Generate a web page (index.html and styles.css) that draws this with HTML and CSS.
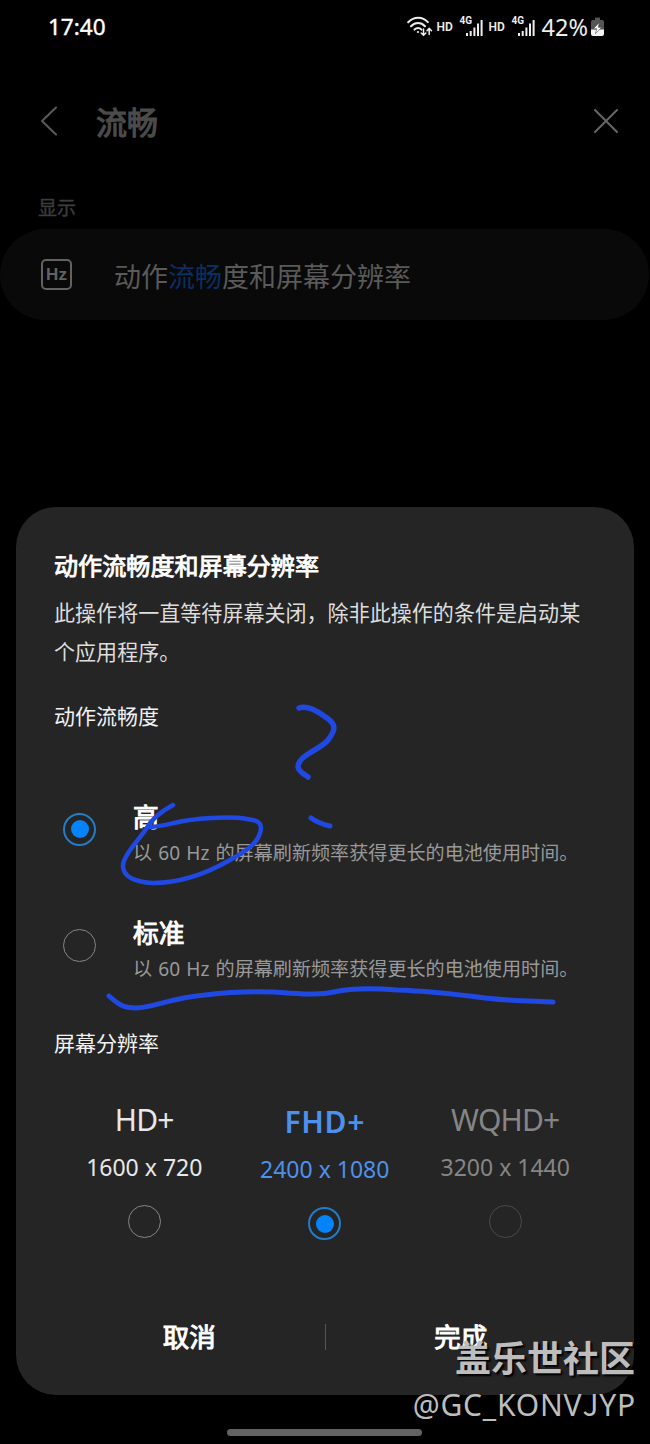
FILE: index.html
```html
<!DOCTYPE html>
<html lang="zh-CN">
<head>
<meta charset="utf-8">
<title>动作流畅度和屏幕分辨率</title>
<link rel="stylesheet" href="styles.css">
</head>
<body>
<div class="screen">
  <header class="status">
    <span class="clock">17:40</span>
    <div class="indicators">
      <svg class="wifi" width="26" height="22" viewBox="0 0 26 22" fill="none" stroke="#eee" stroke-width="2" stroke-linecap="round">
        <path d="M1.2 6.2C7 .2 15.500 .2 20.800 6.200M4 10.200c4.200-4.200 10-4.200 14 0M7.500 13.600c2.200-2 5-2 7 0"/>
        <circle cx="11" cy="16" r="1.100" fill="#eee" stroke="none"/>
        <path stroke-width="1.500" d="M16.500 13v6M14.200 17l2.300 2.300L18.800 17M22.200 18.500v-6M20 14.700l2.200-2.300 2.300 2.300"/>
      </svg>
      <span class="hd hd-first">HD</span>
      <div class="cell"><span class="gen">4G</span><svg width="22" height="20" viewBox="0 0 22 20" fill="#eee"><path d="M5 16h2v3H5zM8.700 14h2v5h-2zM12.400 10.500h2V19h-2zM16 6.500h2V19h-2zM19.600 3h2v16h-2z"/></svg></div>
      <span class="hd hd-second">HD</span>
      <div class="cell"><span class="gen">4G</span><svg width="22" height="20" viewBox="0 0 22 20" fill="#eee"><path d="M5 16h2v3H5zM8.700 14h2v5h-2zM12.400 10.500h2V19h-2zM16 6.500h2V19h-2zM19.600 3h2v16h-2z"/></svg></div>
      <span class="percent">42%</span>
      <svg class="battery" width="13" height="20" viewBox="0 0 13 20">
        <path fill="#555" d="M4 1.200Q4 .5 4.700 .5h3.600q.7 0 .7.700V3h2q2 0 2 2v8H0V5q0-2 2-2h2z"/>
        <path fill="#f4f4f4" d="M0 12.500h13V17q0 2-2 2H2q-2 0-2-2z"/>
        <path fill="#fff" stroke="#333" stroke-width=".5" d="M8.400 5.500 2.300 11.800h3.500l-1.400 4.900 6.300-6.400H7.200z"/>
      </svg>
    </div>
  </header>

  <div class="search-head">
    <svg class="back" width="18" height="30" viewBox="0 0 18 30" fill="none" stroke="#5a5a5a" stroke-width="2" stroke-linecap="round" stroke-linejoin="round"><path d="M16 1.500 2 15l14 13.500"/></svg>
    <h1 class="query">流畅</h1>
    <svg class="close" width="26" height="26" viewBox="0 0 26 26" stroke="#666" stroke-width="2" stroke-linecap="round"><path d="M2 2l22 22M24 2 2 24"/></svg>
  </div>
  <p class="group">显示</p>
  <div class="result">
    <div class="hz">Hz</div>
    <p class="result-name">动作<span class="match">流畅</span>度和屏幕分辨率</p>
  </div>

  <main class="dialog">
    <h2 class="title">动作流畅度和屏幕分辨率</h2>
    <p class="message">此操作将一直等待屏幕关闭，除非此操作的条件是启动某<br>个应用程序。</p>
    <h3 class="label label-motion">动作流畅度</h3>
    <div class="option">
      <i class="radio on"></i>
      <div class="option-text"><div class="option-name">高</div><p class="option-desc">以 60 Hz 的屏幕刷新频率获得更长的电池使用时间。</p></div>
    </div>
    <div class="option">
      <i class="radio"></i>
      <div class="option-text"><div class="option-name">标准</div><p class="option-desc">以 60 Hz 的屏幕刷新频率获得更长的电池使用时间。</p></div>
    </div>
    <h3 class="label label-resolution">屏幕分辨率</h3>
    <div class="resolutions">
      <div class="res"><span class="res-name">HD+</span><span class="res-size">1600 x 720</span><i class="radio"></i></div>
      <div class="res selected"><span class="res-name">FHD+</span><span class="res-size">2400 x 1080</span><i class="radio on"></i></div>
      <div class="res disabled"><span class="res-name">WQHD+</span><span class="res-size">3200 x 1440</span><i class="radio"></i></div>
    </div>
    <div class="actions">
      <span class="action">取消</span><i class="divider"></i><span class="action">完成</span>
    </div>
  </main>
  <div class="home-bar"></div>

  <svg class="ink" width="650" height="1444" viewBox="0 0 650 1444" fill="none" stroke="#1f49e2" stroke-width="5.500" stroke-linecap="round" stroke-linejoin="round">
    <path d="M299 708C308 705 317 711 327 718C337 725 335 731 328 740C320 750 298 755 298 767C299 772 304 774 308 777"/>
    <path stroke-width="5" d="M311 818C315 821 324 825 330 826"/>
    <path stroke-width="4.500" d="M173 805C160 812 151 820 146 829C138 841 122 857 123 867C124 876 134 882 153 883C179 883 204 875 230 860C250 849 260 841 261 828C261 822 256 820 247 819C229 816 194 818 174 823C165 825 157 827 149 827"/>
    <path stroke-width="5" d="M109 996C118 1004 123 1008 136 1008C155 1007 171 998 205 995C240 991 263 991 288 993C306 994 320 995 334 992C352 988 371 988 397 990C430 991 454 994 485 998C511 1001 535 1001 553 1002"/>
  </svg>
  <div class="watermark">
    <div class="community">盖乐世社区</div>
    <div class="author">@GC_KONV<span class="author-j">J</span>YP</div>
  </div>
</div>
</body>
</html>
```
FILE: styles.css
```css
* { box-sizing: border-box; margin: 0; padding: 0; }
body {
  background: #000;
  font-family: "Noto Sans", "Noto Sans CJK SC", sans-serif;
  color: #fff;
}
.screen {
  position: relative;
  width: 650px;
  height: 1444px;
  overflow: hidden;
  display: flex;
  flex-direction: column;
}

.status {
  display: flex;
  justify-content: space-between;
  align-items: center;
  height: 54px;
  padding: 0 46px 0 48px;
}
.clock { font-size: 22.500px; line-height: 30px; -webkit-text-stroke: 0.400px currentColor; }
.indicators { display: flex; align-items: center; color: #eee; }
.hd { font-size: 12px; line-height: 16px; font-weight: 600; width: 17px; font-family: Roboto, sans-serif; }
.hd-first { margin: 0 7px 0 4px; }
.hd-second { margin: 0 7px 0 6px; }
.cell { display: flex; position: relative; width: 22px; height: 20px; }
.cell svg { display: block; }
.gen {
  position: absolute;
  left: -1px;
  top: -2px;
  font: 700 10px/12px Roboto, sans-serif;
}
.percent { font-size: 23.500px; line-height: 30px; margin-left: 7px; }
.battery { margin-left: 3px; }

.search-head {
  display: flex;
  align-items: center;
  height: 60px;
  margin-top: 37px;
  padding: 0 31px 0 40px;
}
.query {
  margin-left: 38px;
  padding-top: 3px;
  font-size: 31px;
  line-height: 43px;
  font-weight: 400;
  color: #4b4b4b;
  -webkit-text-stroke: 1.200px currentColor;
}
.close { margin-left: auto; }
.group { margin: 43px 0 0 38px; font-size: 19px; line-height: 28px; color: #3c3c3c; -webkit-text-stroke: 0.400px currentColor; }
.result {
  display: flex;
  align-items: center;
  height: 91px;
  margin: 7px 1px 0 0;
  padding-left: 41px;
  border-radius: 46px;
  background: #090909;
}
.hz {
  width: 31px;
  height: 31px;
  border: 2px solid #626262;
  border-radius: 5px;
  font: 700 17px/28px "Liberation Sans", sans-serif;
  text-align: center;
  color: #626262;
}
.result-name { margin-left: 42px; padding-top: 5px; font-size: 27px; line-height: 40px; color: #5a5a5a; }
.match { color: #092f60; }

.dialog {
  width: 618px;
  height: 888px;
  margin: 187px 0 0 16px;
  padding: 42px 38px 0;
  border-radius: 40px;
  background: #252525;
}
.title { font-size: 24.100px; line-height: 34px; font-weight: 400; -webkit-text-stroke: 0.900px currentColor; }
.message { margin-top: 10px; font-size: 21.060px; line-height: 39px; color: #dedede; white-space: nowrap; }
.label { font-size: 21px; line-height: 30px; font-weight: 400; color: #f2f2f2; }
.label-motion { margin-top: 30px; }
.option {
  display: flex;
  align-items: center;
  gap: 37px;
  height: 116px;
  padding-left: 9px;
}
.label-motion + .option { margin-top: 40px; }
.option-text { padding-top: 12px; }
.radio {
  display: flex;
  align-items: center;
  justify-content: center;
  flex: none;
  width: 33px;
  height: 33px;
  border: 1.500px solid #858585;
  border-radius: 50%;
}
.radio.on { border: 2px solid #227cc8; }
.radio.on::after { content: ""; width: 18px; height: 18px; border-radius: 50%; background: #0583fb; }
.option-name { font-size: 25.700px; line-height: 36px; font-weight: 400; -webkit-text-stroke: 1px currentColor; }
.option-desc { font-size: 19.100px; line-height: 34px; word-spacing: 1.200px; color: #999; white-space: nowrap; }
.label-resolution { margin-top: 25px; }

.resolutions { display: grid; grid-template-columns: repeat(3, 180.500px); margin: 42px 0 0 0; }
.res { display: flex; flex-direction: column; align-items: center; color: #e8e8e8; }
.res-name { font-size: 30px; line-height: 40px; letter-spacing: -0.800px; }
.res-size { margin-top: 10px; font-size: 23px; line-height: 34px; }
.res .radio { margin-top: 21px; }
.selected { color: #4e91ec; padding-top: 2px; }
.selected .res-name { font-weight: 600; letter-spacing: 0.600px; }
.disabled { color: #858585; }
.disabled .radio { border-color: #4a4a4a; }

.actions {
  display: flex;
  align-items: center;
  justify-content: center;
  height: 40px;
  margin-top: 77px;
}
.action { width: 271px; text-align: center; font-size: 26.500px; line-height: 40px; font-weight: 400; -webkit-text-stroke: 1px currentColor; }
.divider { width: 1px; height: 26px; background: #555; }
.home-bar { width: 195px; height: 7px; margin: 34px 0 0 227px; border-radius: 4px; background: #626262; flex: none; }

.ink { position: absolute; left: 0; top: 0; }
.watermark {
  position: absolute;
  right: 15px;
  bottom: 18px;
  text-align: right;
  color: #bdbdbd;
  text-shadow: 2px 2px 2px #000;
}
.community { font-size: 36px; line-height: 46px; font-weight: 700; }
.author { font-size: 30px; line-height: 43px; letter-spacing: 0.800px; margin-right: -1px; }
.author-j { font-family: "Noto Sans CJK SC", sans-serif; }
```
